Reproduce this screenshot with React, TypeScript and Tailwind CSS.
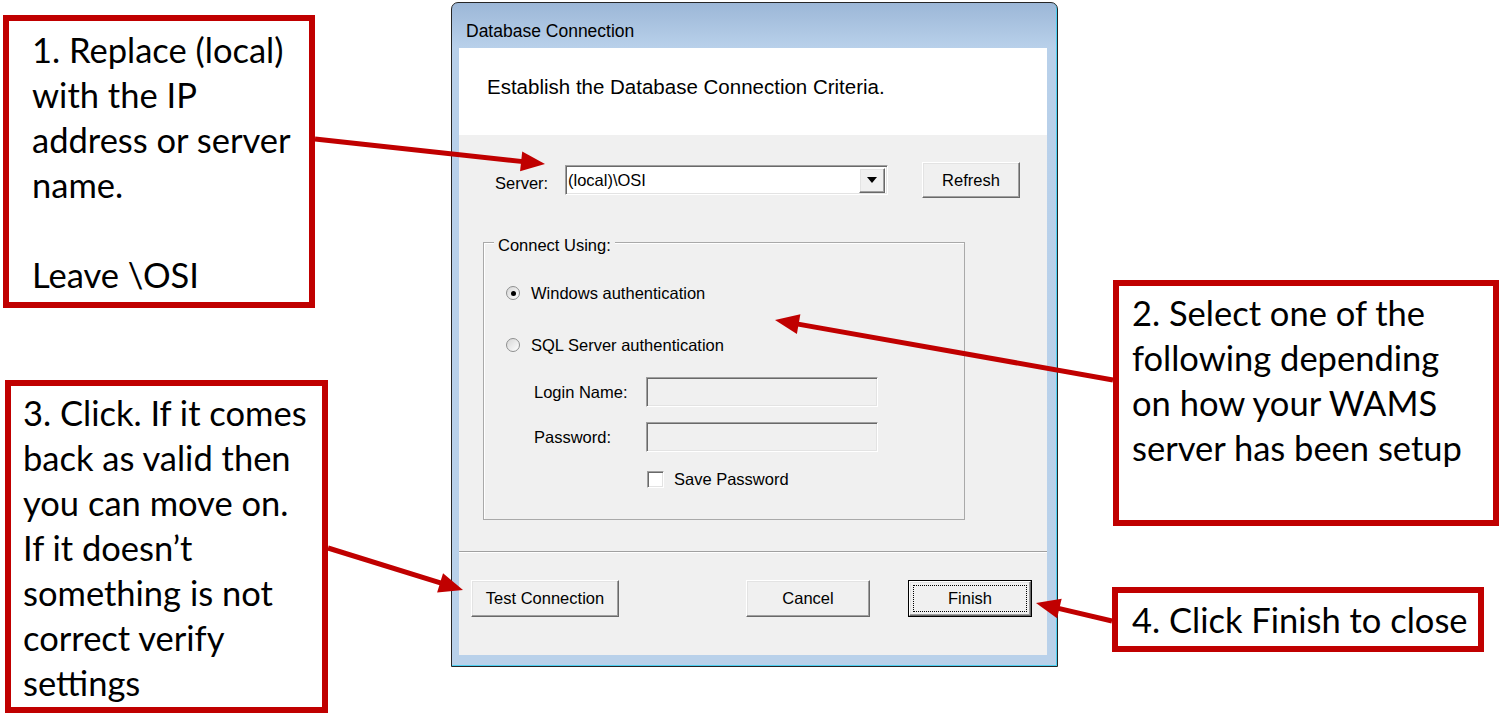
const RED = "#c00000";

type Pt = [number, number];

// Straight annotation arrow with a filled triangular head at `to`.
function Arrow({ from, to }: { from: Pt; to: Pt }) {
  const [x1, y1] = from;
  const [x2, y2] = to;
  const len = Math.hypot(x2 - x1, y2 - y1);
  const ux = (x2 - x1) / len;
  const uy = (y2 - y1) / len;
  const head = 24;
  const half = 10;
  const bx = x2 - ux * head;
  const by = y2 - uy * head;
  const points = `${x2},${y2} ${bx - uy * half},${by + ux * half} ${bx + uy * half},${by - ux * half}`;
  return (
    <g>
      <line x1={x1} y1={y1} x2={bx + ux * 2} y2={by + uy * 2} stroke={RED} strokeWidth={5} />
      <polygon points={points} fill={RED} />
    </g>
  );
}

function Callout({ lines, className }: { lines: string[]; className: string }) {
  return (
    <div
      className={`shrink-0 border-[6px] border-[#c00000] bg-white font-['Lato','Open_Sans',sans-serif] text-[34.5px] leading-[45px] text-black ${className}`}>
      {lines.map((line, i) => (
        <div key={i} className="whitespace-nowrap">
          {line || "\u00a0"}
        </div>
      ))}
    </div>
  );
}

const raised =
  "flex items-center justify-center border border-t-white border-l-white border-r-[#696969] border-b-[#696969] bg-[#f0f0f0] shadow-[inset_-1px_-1px_0_#a0a0a0,inset_1px_1px_0_#e3e3e3]";

const sunken =
  "border border-t-[#a0a0a0] border-l-[#a0a0a0] border-r-white border-b-white shadow-[inset_1px_1px_0_#696969,inset_-1px_-1px_0_#e3e3e3]";

function Radio({ checked, label }: { checked?: boolean; label: string }) {
  return (
    <div className="flex h-[20px] items-center">
      <div className="flex h-[14px] w-[14px] items-center justify-center rounded-full border border-[#8e8f8f] bg-[linear-gradient(135deg,#d6d6d6,#ffffff)]">
        {checked ? <div className="h-[5px] w-[5px] rounded-full bg-black" /> : null}
      </div>
      <span className="ml-[11px] leading-[20px]">{label}</span>
    </div>
  );
}

function Field({ label, className }: { label: string; className: string }) {
  return (
    <div className={`flex h-[30px] items-center ${className}`}>
      <span className="ml-[28px] w-[112px] leading-[20px]">{label}</span>
      <div className={`h-[30px] w-[232px] bg-[#f0f0f0] ${sunken}`} />
    </div>
  );
}

function Dialog() {
  return (
    <div className="mt-[2px] flex h-[665px] w-[607px] shrink-0 flex-col rounded-t-[7px] border border-[#262626] bg-[linear-gradient(#9cb7d7,#b8d0ea_44px,#b9d1ea)] pr-[10px] pb-[11px] pl-[7px] shadow-[inset_-1px_-1px_0_#4cd0f2]">
      <div className="flex h-[45px] shrink-0 items-end pb-[7px] pl-[7px] font-['Liberation_Sans',Arial,sans-serif] text-[17.5px] leading-[20px] text-black">
        Database Connection
      </div>

      <div className="flex flex-1 flex-col bg-[#f0f0f0] font-['Liberation_Sans',Arial,sans-serif] text-[16.5px] text-black">
        <div className="h-[87px] shrink-0 bg-white pt-[27px] pl-[28px] text-[20.5px] leading-[24px]">
          Establish the Database Connection Criteria.
        </div>

        {/* server picker */}
        <div className="mt-[27px] flex h-[36px] items-start">
          <span className="mt-[11px] ml-[36px] w-[70px] leading-[20px]">Server:</span>
          <div className={`mt-[3px] flex h-[30px] w-[323px] items-center bg-white pr-[2px] pl-[2px] ${sunken}`}>
            <span className="flex-1 leading-[20px]">(local)\OSI</span>
            <div className={`h-[25px] w-[26px] ${raised}`}>
              <svg width="10" height="6" viewBox="0 0 10 6">
                <polygon points="0,0 10,0 5,6" fill="#000" />
              </svg>
            </div>
          </div>
          <div className={`ml-[34px] h-[36px] w-[98px] ${raised}`}>Refresh</div>
        </div>

        {/* Connect Using group */}
        <div className="relative mt-[44px] ml-[24px] h-[278px] w-[482px] border border-[#a9a9a9] shadow-[inset_1px_1px_0_#ffffff]">
          <span className="absolute top-[-8px] left-[10px] bg-[#f0f0f0] px-[4px] leading-[20px]">
            Connect Using:
          </span>
          <div className="flex flex-col pt-[40px] pl-[22px]">
            <Radio checked label="Windows authentication" />
            <div className="mt-[32px]">
              <Radio label="SQL Server authentication" />
            </div>
            <Field label="Login Name:" className="mt-[22px]" />
            <Field label="Password:" className="mt-[15px]" />
            <div className="mt-[17px] flex h-[20px] items-center pl-[141px]">
              <div className={`h-[17px] w-[17px] bg-white ${sunken}`} />
              <span className="ml-[10px] leading-[20px]">Save Password</span>
            </div>
          </div>
        </div>

        <div className="mt-[31px] h-[2px] border-t border-b border-t-[#a0a0a0] border-b-white" />

        {/* footer buttons */}
        <div className="mt-[27px] flex h-[37px]">
          <div className={`ml-[12px] w-[148px] ${raised}`}>Test Connection</div>
          <div className={`ml-[127px] w-[124px] ${raised}`}>Cancel</div>
          <div className="ml-[38px] w-[124px] border border-black">
            <div className={`h-full w-full p-[3px] ${raised}`}>
              <div className="flex h-full w-full items-center justify-center border border-dotted border-black">
                Finish
              </div>
            </div>
          </div>
        </div>
      </div>
    </div>
  );
}

export default function App() {
  return (
    <div className="relative flex h-[726px] w-[1504px] overflow-hidden bg-white">
      <div className="flex w-[451px] shrink-0 flex-col">
        <Callout
          className="mt-[15px] ml-[3px] h-[293px] w-[312px] pt-[6px] pl-[23px]"
          lines={["1. Replace (local)", "with the IP", "address or server", "name.", "", "Leave \\OSI"]}
        />
        <Callout
          className="mt-[72px] ml-[5px] h-[333px] w-[323px] pt-[4px] pl-[12px]"
          lines={[
            "3. Click. If it comes",
            "back as valid then",
            "you can move on.",
            "If it doesn\u2019t",
            "something is not",
            "correct verify",
            "settings",
          ]}
        />
      </div>

      <Dialog />

      <div className="flex flex-col">
        <Callout
          className="mt-[280px] ml-[55px] h-[246px] w-[386px] pt-[4px] pl-[13px]"
          lines={["2. Select one of the", "following depending", "on how your WAMS", "server has been setup"]}
        />
        <Callout
          className="mt-[61px] ml-[54px] flex h-[65px] w-[372px] flex-col justify-center pl-[14px]"
          lines={["4. Click Finish to close"]}
        />
      </div>

      <svg className="pointer-events-none absolute inset-0" width="1504" height="726" viewBox="0 0 1504 726">
        <Arrow from={[315, 139]} to={[545, 164]} />
        <Arrow from={[1113, 380]} to={[775, 320]} />
        <Arrow from={[328, 548]} to={[463, 590]} />
        <Arrow from={[1112, 621]} to={[1036, 603]} />
      </svg>
    </div>
  );
}
